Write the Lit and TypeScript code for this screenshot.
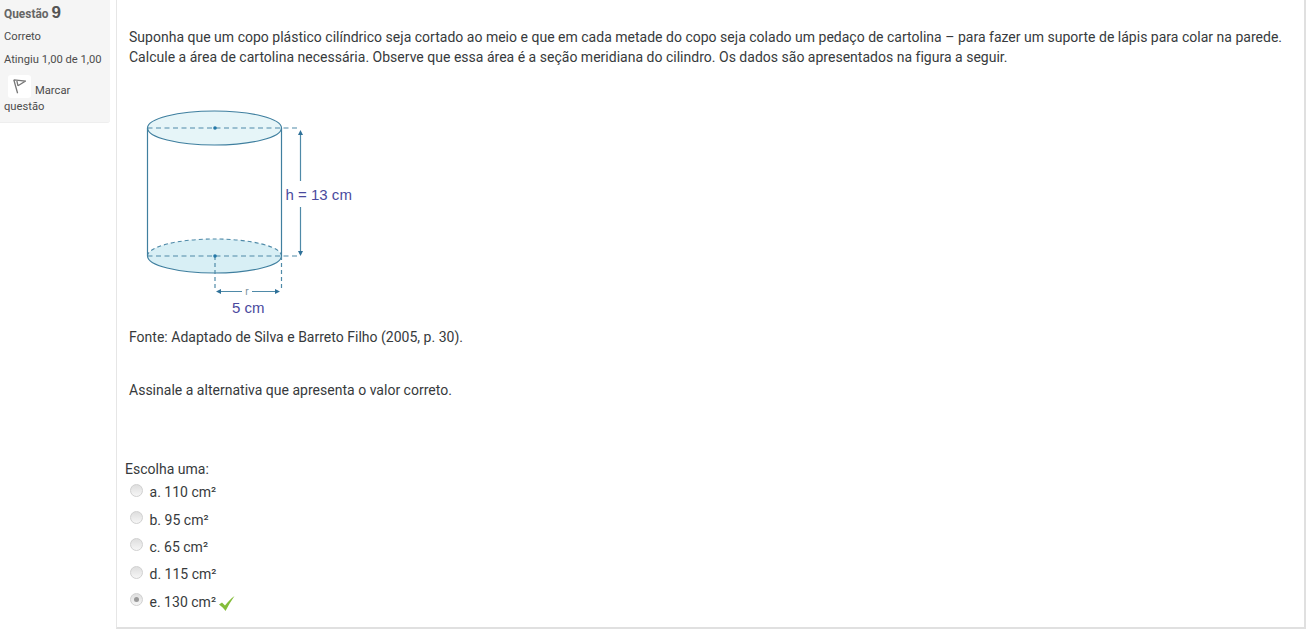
import { LitElement, html, css } from 'lit';
import { customElement } from 'lit/decorators.js';

const options = [
  { label: 'a. 110 cm²' },
  { label: 'b. 95 cm²' },
  { label: 'c. 65 cm²' },
  { label: 'd. 115 cm²' },
  { label: 'e. 130 cm²', checked: true },
];

@customElement('app-root')
export class AppRoot extends LitElement {
  static styles = css`
    :host {
      display: block;
      height: 631px;
      overflow: hidden;
      background: #fff;
      font-family: Roboto, "Liberation Sans", sans-serif;
      color: #373a3c;
    }
    .page {
      display: flex;
      align-items: flex-start;
      gap: 6px;
    }
    .info {
      flex: none;
      box-sizing: border-box;
      width: 110px;
      height: 123px;
      padding: 3px 4px 0;
      background: #f5f5f5;
      border-bottom: 1px solid #eee;
      border-radius: 0 0 3px 0;
      font-size: 11.2px;
      color: #4c4c4c;
    }
    .no {
      font-size: 11.9px;
      font-weight: 700;
      color: #666;
      height: 20px;
      line-height: 20px;
    }
    .no b {
      font-size: 17px;
      font-family: "Liberation Sans", sans-serif;
      color: #555;
    }
    .state {
      margin-top: 7px;
      height: 13px;
      line-height: 13px;
    }
    .grade {
      margin-top: 10px;
      height: 13px;
      line-height: 13px;
      white-space: nowrap;
    }
    .flag {
      margin-top: 9px;
      line-height: 15px;
    }
    .flag-icon {
      display: inline-flex;
      align-items: center;
      justify-content: center;
      width: 23px;
      height: 23px;
      margin: 0 4px 1px 4px;
      background: #fff;
      border-radius: 3px;
      vertical-align: 0;
    }
    .card {
      box-sizing: border-box;
      width: 1190px;
      height: 629px;
      padding: 27px 12px 0;
      background: #fff;
      border-left: 1px solid #e6e6e6;
      border-right: 2px solid #e0e0e0;
      border-bottom: 2px solid #e0e0e0;
      font-size: 14px;
      line-height: 20px;
      letter-spacing: 0.012px;
    }
    p {
      margin: 0;
    }
    .figure {
      display: block;
      margin: 33px 0 0;
    }
    .source {
      margin-top: 7px;
    }
    .ask {
      margin-top: 33px;
    }
    .prompt {
      margin: 59px 0 0 -4px;
    }
    .answer {
      display: flex;
      flex-direction: column;
      margin-top: -0.5px;
    }
    .opt {
      display: flex;
      align-items: center;
      height: 27.4px;
    }
    .radio {
      flex: none;
      box-sizing: border-box;
      display: flex;
      align-items: center;
      justify-content: center;
      width: 13px;
      height: 13px;
      margin: -4px 6.5px 0 1px;
      border-radius: 50%;
      border: 1px solid #d0d0d0;
      background: linear-gradient(#dedede, #f6f6f6);
    }
    .radio i {
      width: 5px;
      height: 5px;
      border-radius: 50%;
      background: #999;
    }
    .check {
      margin: 4px 0 0 3px;
    }
  `;

  render() {
    return html`
      <div class="page">
        <aside class="info">
          <div class="no">Questão <b>9</b></div>
          <div class="state">Correto</div>
          <div class="grade">Atingiu 1,00 de 1,00</div>
          <div class="flag">
            <span class="flag-icon">
              <svg width="13" height="15" viewBox="0 0 13 15" fill="none" stroke="#777" stroke-width="1.3">
                <path d="M0.8 0.8 L12.5 2 L5 6.8 M0.8 0.8 L4.6 14.2 M3.8 1.6 L5 6.8" />
              </svg>
            </span>Marcar questão
          </div>
        </aside>
        <main class="card">
          <p>Suponha que um copo plástico cilíndrico seja cortado ao meio e que em cada metade do copo seja colado um pedaço de cartolina – para fazer um suporte de lápis para colar na parede. Calcule a área de cartolina necessária. Observe que essa área é a seção meridiana do cilindro. Os dados são apresentados na figura a seguir.</p>
          <svg class="figure" width="232" height="220" viewBox="129 100 232 220">
            <ellipse cx="214.5" cy="128" rx="67" ry="17" fill="#e6f5f8" stroke="#3f7f9f" stroke-width="1.2" />
            <path d="M147.5 256 A67 17 0 0 1 281.5 256 A67 17 0 0 1 147.5 256 Z" fill="#d8eff5" stroke="none" />
            <path d="M147.5 256 A67 17 0 0 0 281.5 256" fill="none" stroke="#3f7f9f" stroke-width="1.2" />
            <path d="M147.5 256 A67 17 0 0 1 281.5 256" fill="none" stroke="#4f8aa8" stroke-width="1.1" stroke-dasharray="4 3" />
            <path d="M147.5 128 V256 M281.5 128 V256" stroke="#3f7f9f" stroke-width="1.2" fill="none" />
            <path d="M147.5 128 H300 M147.5 256 H300" stroke="#4f8aa8" stroke-width="1.2" stroke-dasharray="5 3.5" fill="none" />
            <path d="M215 256 V291 M281.5 256 V291" stroke="#4f8aa8" stroke-width="1.2" stroke-dasharray="4 3" fill="none" />
            <circle cx="215" cy="128" r="1.8" fill="#2378a8" />
            <circle cx="215" cy="256" r="1.8" fill="#2378a8" />
            <path d="M300.5 133 V181 M300.5 207 V254" stroke="#4f8aa8" stroke-width="1.2" fill="none" />
            <path d="M300.5 130 L298 135 H303 Z M300.5 256 L298 251 H303 Z" fill="#2f7199" />
            <path d="M219 291.5 H242 M252 291.5 H277" stroke="#4f8aa8" stroke-width="1.2" fill="none" />
            <path d="M216 291.5 L221 289 V294 Z M280 291.5 L275 289 V294 Z" fill="#2f7199" />
            <text x="247" y="295" font-size="10" fill="#7a8f9c" text-anchor="middle">r</text>
            <text x="285.5" y="200" font-size="15" fill="#4a4a9e" font-family="Liberation Sans, sans-serif">h = 13 cm</text>
            <text x="232" y="313" font-size="15" fill="#4a4a9e" font-family="Liberation Sans, sans-serif">5 cm</text>
          </svg>
          <p class="source">Fonte: Adaptado de Silva e Barreto Filho (2005, p. 30).</p>
          <p class="ask">Assinale a alternativa que apresenta o valor correto.</p>
          <div class="prompt">Escolha uma:</div>
          <div class="answer">
            ${options.map(
              (o) => html`
                <div class="opt">
                  <span class="radio">${o.checked ? html`<i></i>` : ''}</span>
                  <span>${o.label}</span>
                  ${o.checked
                    ? html`<svg class="check" width="16" height="15" viewBox="0 0 16 15">
                        <path d="M0 8.5 L3 6.5 L6 9.5 C8.5 6 12 2.5 15.5 0 C12 5 9 10 6.5 15 C5 12.5 2.5 10.5 0 8.5 Z" fill="#84bd3a" />
                      </svg>`
                    : ''}
                </div>
              `
            )}
          </div>
        </main>
      </div>
    `;
  }
}
